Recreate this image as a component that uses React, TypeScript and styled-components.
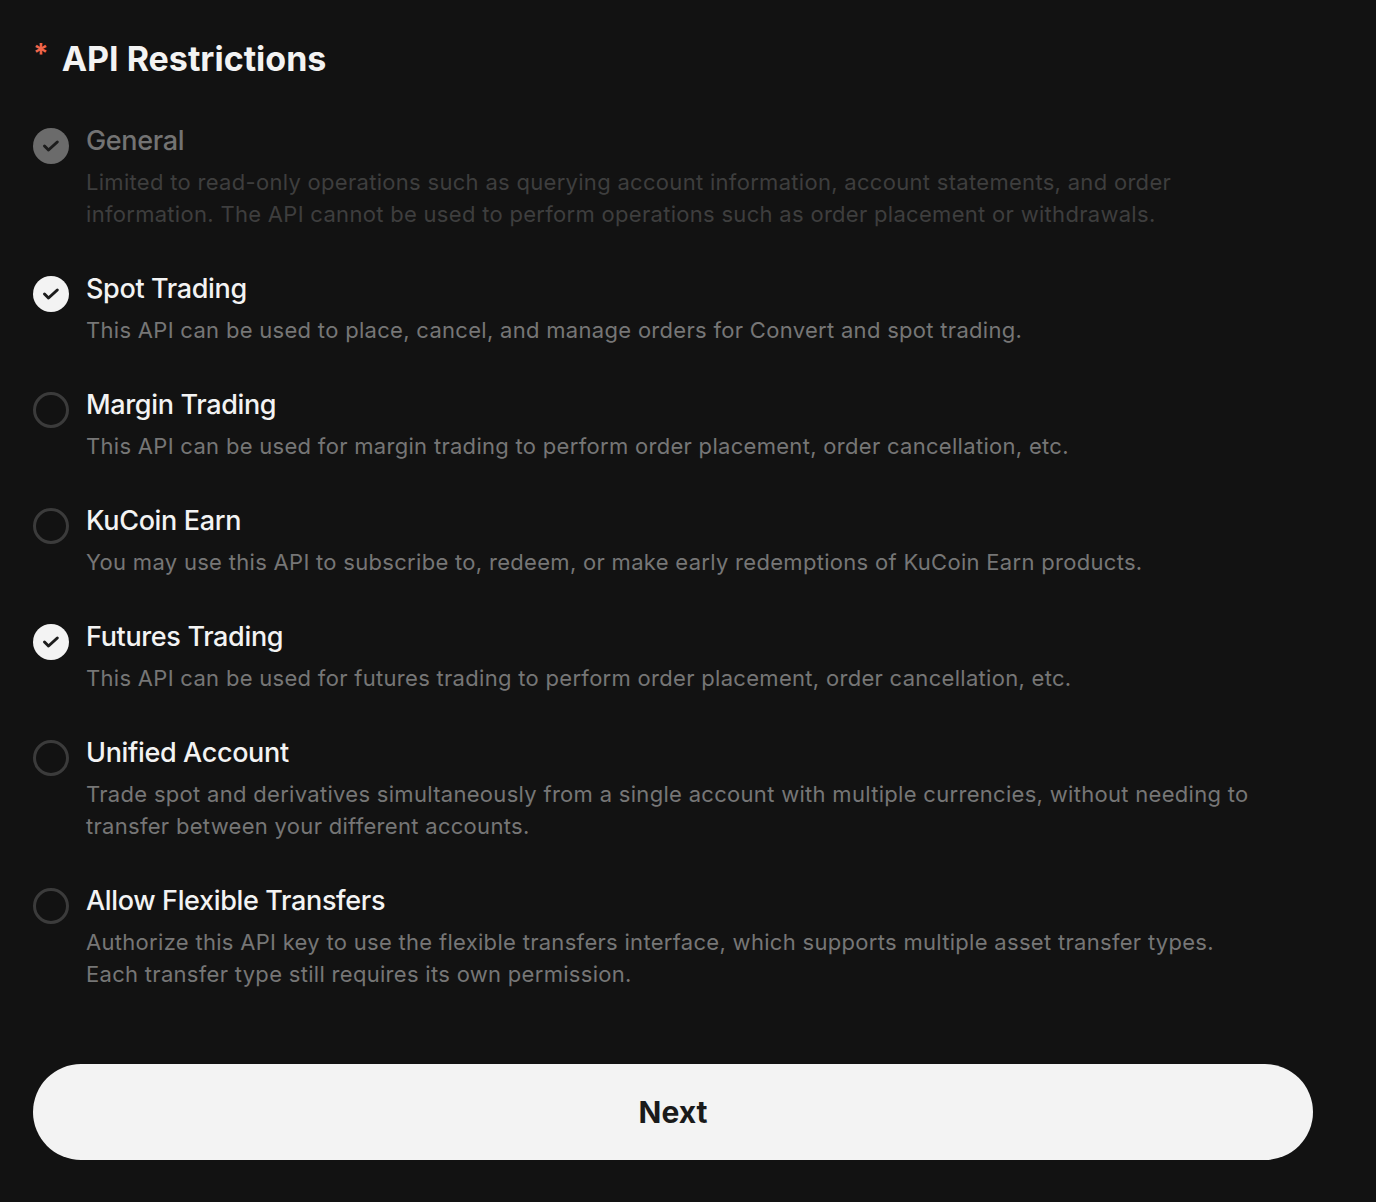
import React from "react";
import styled, {createGlobalStyle} from "styled-components";

const GlobalStyle = createGlobalStyle`
  html, body {
    margin: 0;
    padding: 0;
    background: #121212;
  }
  body {
    font-family: Inter, "Noto Sans", "Liberation Sans", sans-serif;
    -webkit-font-smoothing: antialiased;
  }
`;

const Page = styled.div({
  backgroundColor: "#121212",
  minHeight: 1202,
  boxSizing: "border-box",
  padding: "37px 63px 43px 33px",
  display: "flex",
  flexDirection: "column",
});

const Title = styled.h2({
  margin: 0,
  display: "flex",
  alignItems: "flex-start",
  gap: 13,
  fontSize: 34,
  lineHeight: "44px",
  fontWeight: 700,
  color: "#f3f3f3",
  letterSpacing: 0,
});

const Asterisk = styled.span({
  color: "#f0654a",
  fontSize: 28,
  lineHeight: "30px",
  fontWeight: 700,
  marginTop: 2,
});

const List = styled.div({
  marginTop: 42,
  display: "flex",
  flexDirection: "column",
  gap: 41,
});

const Item = styled.div({
  display: "flex",
  alignItems: "flex-start",
  gap: 17,
});

const Circle = styled.span<{$state: "checked" | "disabled" | "empty"}>(({$state}) => ({
  flex: "0 0 36px",
  width: 36,
  height: 36,
  marginTop: 5,
  boxSizing: "border-box",
  borderRadius: "50%",
  display: "flex",
  alignItems: "center",
  justifyContent: "center",
  backgroundColor: $state === "checked" ? "#f3f3f3" : $state === "disabled" ? "#6b6b6b" : "transparent",
  border: $state === "empty" ? "3px solid #3b3b3b" : "none",
}));

const Body = styled.div({
  display: "flex",
  flexDirection: "column",
  gap: 7,
  minWidth: 0,
  maxWidth: 1185,
});

const Label = styled.div<{$muted?: boolean}>(({$muted}) => ({
  fontSize: 27,
  lineHeight: "36px",
  fontWeight: 500,
  color: $muted ? "#737373" : "#f3f3f3",
  letterSpacing: -0.35,
}));

const Desc = styled.div<{$muted?: boolean}>(({$muted}) => ({
  fontSize: 22,
  lineHeight: "32px",
  fontWeight: 400,
  color: $muted ? "#3e3e3e" : "#767676",
  letterSpacing: 0.3,
}));

const NextButton = styled.button({
  marginTop: 74,
  width: 1280,
  height: 96,
  border: "none",
  borderRadius: 48,
  backgroundColor: "#f3f3f3",
  color: "#1a1a1a",
  fontFamily: "inherit",
  fontSize: 30,
  fontWeight: 700,
  cursor: "pointer",
});

function Check() {
  return (
    <svg width="36" height="36" viewBox="0 0 36 36" fill="none">
      <path
        d="M11.5 18 L15.5 22 L24.3 14"
        stroke="#1c1c1c"
        strokeWidth="3"
        strokeLinecap="round"
        strokeLinejoin="round"
      />
    </svg>
  );
}

type Option = {
  label: string;
  desc: React.ReactNode;
  state: "checked" | "disabled" | "empty";
};

const options: Option[] = [
  {
    label: "General",
    desc: "Limited to read-only operations such as querying account information, account statements, and order information. The API cannot be used to perform operations such as order placement or withdrawals.",
    state: "disabled",
  },
  {
    label: "Spot Trading",
    desc: "This API can be used to place, cancel, and manage orders for Convert and spot trading.",
    state: "checked",
  },
  {
    label: "Margin Trading",
    desc: "This API can be used for margin trading to perform order placement, order cancellation, etc.",
    state: "empty",
  },
  {
    label: "KuCoin Earn",
    desc: "You may use this API to subscribe to, redeem, or make early redemptions of KuCoin Earn products.",
    state: "empty",
  },
  {
    label: "Futures Trading",
    desc: "This API can be used for futures trading to perform order placement, order cancellation, etc.",
    state: "checked",
  },
  {
    label: "Unified Account",
    desc: "Trade spot and derivatives simultaneously from a single account with multiple currencies, without needing to transfer between your different accounts.",
    state: "empty",
  },
  {
    label: "Allow Flexible Transfers",
    desc: (
      <>
        Authorize this API key to use the flexible transfers interface, which supports multiple asset transfer types.
        <br />
        Each transfer type still requires its own permission.
      </>
    ),
    state: "empty",
  },
];

export default function App() {
  return (
    <>
      <GlobalStyle />
      <Page>
        <Title>
          <Asterisk>*</Asterisk>
          API Restrictions
        </Title>
        <List>
          {options.map(o => (
            <Item key={o.label}>
              <Circle $state={o.state}>{o.state !== "empty" && <Check />}</Circle>
              <Body>
                <Label $muted={o.state === "disabled"}>{o.label}</Label>
                <Desc $muted={o.state === "disabled"}>{o.desc}</Desc>
              </Body>
            </Item>
          ))}
        </List>
        <NextButton>Next</NextButton>
      </Page>
    </>
  );
}
